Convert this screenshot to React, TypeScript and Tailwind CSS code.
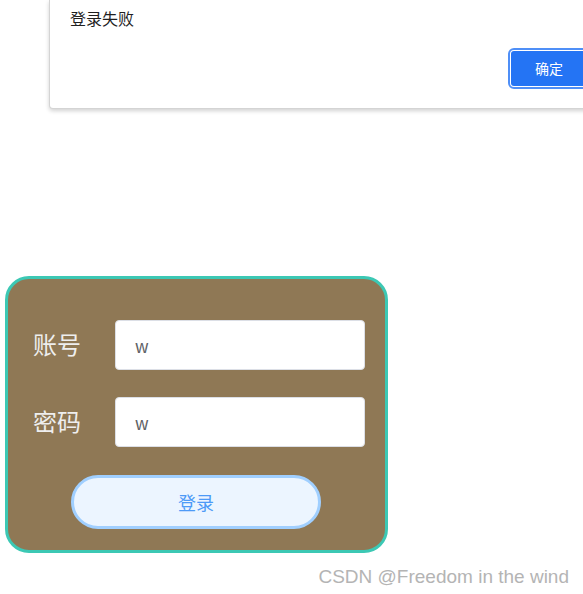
import React, { useState } from 'react';

const cjk = '"Noto Sans CJK SC", "Liberation Sans", sans-serif';

const App: React.FC = () => {
  const [account, setAccount] = useState('w');
  const [password, setPassword] = useState('w');

  return (
    <div
      className="min-h-screen w-full overflow-hidden bg-white"
      style={{ fontFamily: cjk }}
    >
      {/* Alert dialog (top cut off) */}
      <div className="ml-[49px] h-[109px] w-[600px] rounded-b-[4px] border border-t-0 border-[#d4d4d4] bg-white shadow-[0_2px_4px_rgba(0,0,0,0.18)]">
        <p className="pl-[20px] pt-[7px] text-[16px] leading-[22px] text-[#1f1f1f]">登录失败</p>
        <div className="pl-[458px] pt-[19px]">
          <span className="inline-flex rounded-[6px] border-2 border-[#4f8ff7] bg-white p-[1px]">
            <span className="flex h-[35px] w-[76px] items-center justify-center rounded-[3px] bg-[#2474f4] text-[14px] text-white">
              确定
            </span>
          </span>
        </div>
      </div>

      {/* Login card */}
      <div className="ml-[5px] mt-[167px] flex h-[277px] w-[383px] flex-col rounded-[24px] border-[3px] border-[#3cc8b4] bg-[#8f7855] pl-[25px] pt-[41px]">
        <div className="flex items-center">
          <label className="w-[82px] pb-[3px] text-[24px] leading-[30px] text-[#eeeeee]">账号</label>
          <input
            value={account}
            onChange={(e) => setAccount(e.target.value)}
            className="h-[50px] w-[250px] rounded-[4px] border border-[#dcdfe6] bg-white px-[19px] text-[17px] text-[#606266] outline-none"
          />
        </div>
        <div className="mt-[27px] flex items-center">
          <label className="w-[82px] pb-[3px] text-[24px] leading-[30px] text-[#eeeeee]">密码</label>
          <input
            value={password}
            onChange={(e) => setPassword(e.target.value)}
            className="h-[50px] w-[250px] rounded-[4px] border border-[#dcdfe6] bg-white px-[19px] text-[17px] text-[#606266] outline-none"
          />
        </div>
        <div className="mt-[28px] pl-[38px]">
          <button className="h-[54px] w-[250px] rounded-full border-[3px] border-[#a0cfff] bg-[#ecf5ff] text-[18px] text-[#4d9af7]">
            登录
          </button>
        </div>
      </div>

      {/* Watermark */}
      <div
        className="mt-[12px] pr-[14px] text-right text-[19px] leading-[24px] text-[#b4b4b4]"
        style={{ fontFamily: '"Liberation Sans", Arial, sans-serif' }}
      >
        CSDN @Freedom in the wind
      </div>
    </div>
  );
};

export default App;
